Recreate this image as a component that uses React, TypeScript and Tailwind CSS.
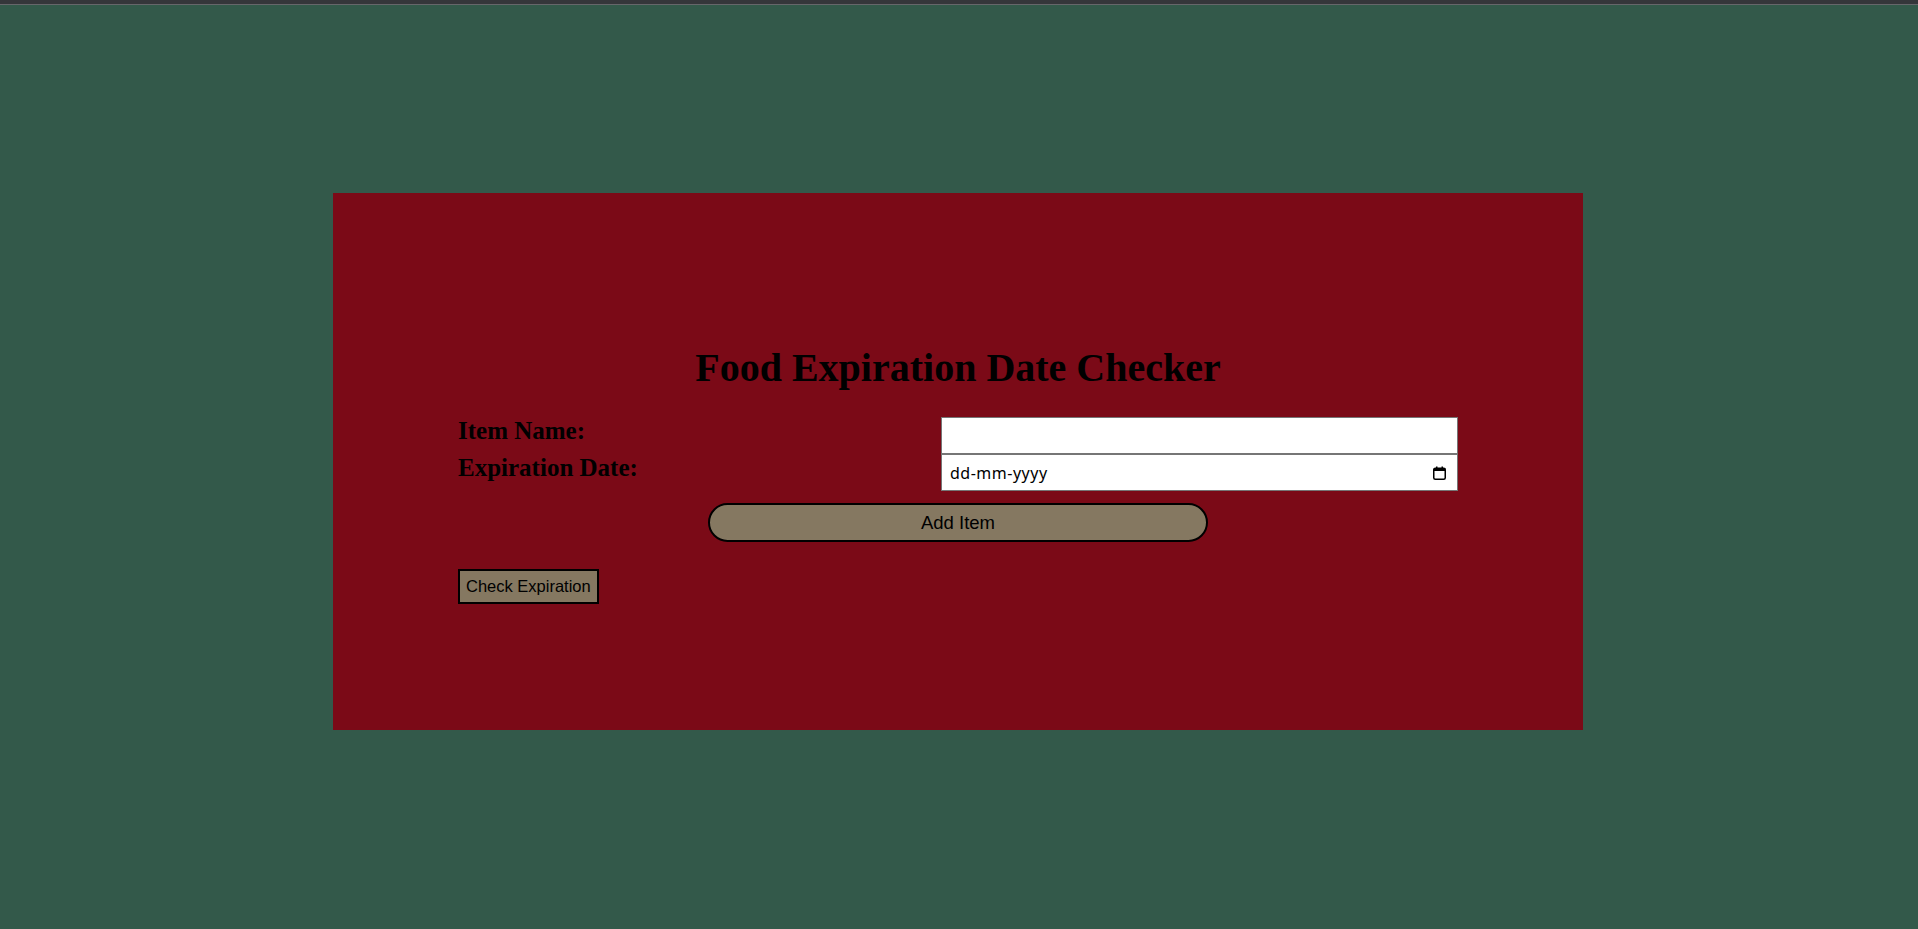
import { useState } from 'react';

type Item = { name: string; date: string };

const CalendarIcon = () => (
  <svg width="13" height="14" viewBox="0 0 13 14" aria-hidden="true">
    <rect x="0.75" y="2.25" width="11.5" height="11" rx="1.5" fill="none" stroke="#000" strokeWidth="1.5" />
    <rect x="0.75" y="2.25" width="11.5" height="2.75" fill="#000" />
    <rect x="3" y="0.5" width="1.5" height="2.5" fill="#000" />
    <rect x="8.5" y="0.5" width="1.5" height="2.5" fill="#000" />
  </svg>
);

const App = () => {
  const [name, setName] = useState('');
  const [date, setDate] = useState('');
  const [items, setItems] = useState<Item[]>([]);

  const addItem = () => {
    if (!name.trim() || !date.trim()) return;
    setItems([...items, { name: name.trim(), date: date.trim() }]);
    setName('');
    setDate('');
  };

  const checkExpiration = () => {
    // placeholder: the list is checked against today's date
    return items;
  };

  return (
    <div className="min-h-screen bg-[#33594a]">
      {/* top strip */}
      <div className="h-[5px] bg-[#35363a] border-b border-[#66666a]" />

      <div className="pt-[188px]">
        <div className="w-[1250px] h-[537px] ml-[333px] bg-[#7b0a17]">
          <div className="w-[1000px] mx-auto pt-[153px]">
            <h1 className="text-center text-black text-[40px] leading-[44px] font-bold font-['Liberation_Serif',serif]">
              Food Expiration Date Checker
            </h1>

            <form
              className="mt-[27px]"
              onSubmit={(e) => {
                e.preventDefault();
                addItem();
              }}
            >
              <div className="flex h-[37px] items-start">
                <label
                  htmlFor="itemName"
                  className="flex-1 text-black text-[25px] leading-[27px] font-bold font-['Liberation_Serif',serif]"
                >
                  Item Name:
                </label>
                <input
                  id="itemName"
                  type="text"
                  value={name}
                  onChange={(e) => setName(e.target.value)}
                  className="w-[517px] h-[37px] bg-white border border-[#767676] px-[8px] text-[16px] text-black outline-none font-['Noto_Sans',sans-serif]"
                />
              </div>
              <div className="flex h-[37px] items-start">
                <label
                  htmlFor="expDate"
                  className="flex-1 text-black text-[25px] leading-[27px] font-bold font-['Liberation_Serif',serif]"
                >
                  Expiration Date:
                </label>
                <div className="relative w-[517px]">
                  <input
                    id="expDate"
                    type="text"
                    value={date}
                    placeholder="dd-mm-yyyy"
                    onChange={(e) => setDate(e.target.value)}
                    className="w-full h-[37px] bg-white border border-[#767676] pl-[8px] pr-[34px] text-[16px] tracking-[0.5px] text-black placeholder:text-black outline-none font-['Noto_Sans',sans-serif]"
                  />
                  <span className="absolute right-[12px] top-1/2 -translate-y-1/2 flex">
                    <CalendarIcon />
                  </span>
                </div>
              </div>

              <button
                type="submit"
                className="block w-[500px] h-[39px] mx-auto mt-[12px] rounded-full border-2 border-black bg-[#857861] text-black text-[18.5px] font-['Liberation_Sans',sans-serif]"
              >
                Add Item
              </button>
            </form>

            <button
              type="button"
              onClick={checkExpiration}
              className="mt-[27px] h-[35px] px-[6px] border-2 border-black bg-[#857861] text-black text-[16.5px] font-['Liberation_Sans',sans-serif]"
            >
              Check Expiration
            </button>
          </div>
        </div>
      </div>
    </div>
  );
};

export default App;
